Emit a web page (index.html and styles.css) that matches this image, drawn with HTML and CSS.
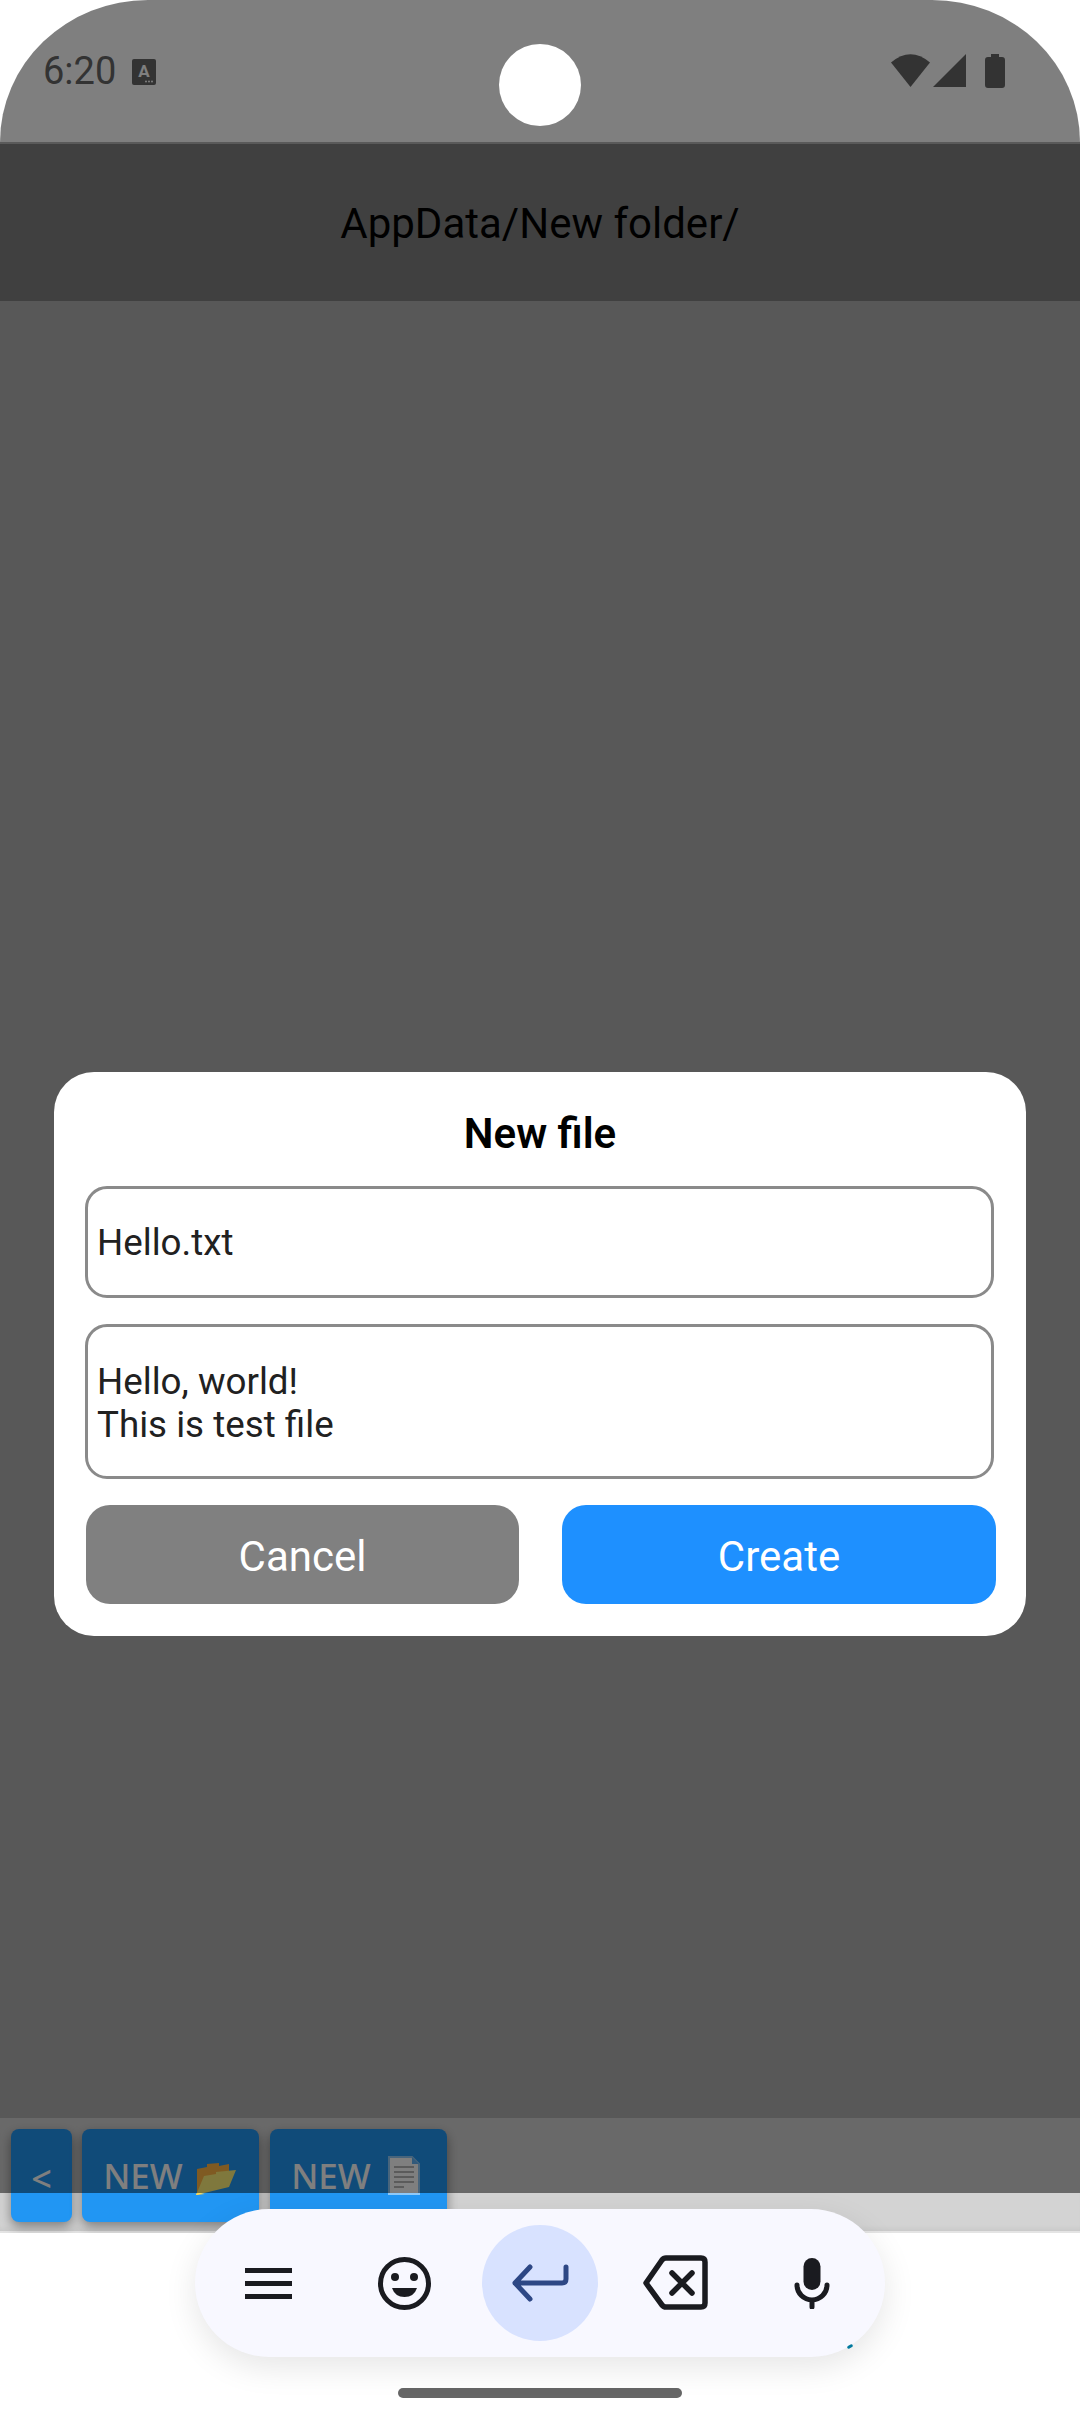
FILE: index.html
```html
<!DOCTYPE html>
<html lang="en">
  <head>
    <meta charset="UTF-8" />
    <meta name="viewport" content="width=device-width, initial-scale=1.0" />
    <title>New file</title>
    <link rel="stylesheet" href="styles.css">
  </head>
  <body>
    <div class="screen">
      <div class="status-bar">
        <div class="status-left">
          <span class="clock">6:20</span>
          <svg class="icon-ime" viewBox="0 0 24 26">
            <rect width="24" height="26" rx="2" fill="#666" />
            <text x="12" y="18" text-anchor="middle" class="ime-letter">A</text>
            <circle cx="14" cy="22.5" r="1" fill="#fff" />
            <circle cx="17" cy="22.5" r="1" fill="#fff" />
            <circle cx="20" cy="22.5" r="1" fill="#fff" />
          </svg>
        </div>
        <div class="camera"></div>
        <div class="status-right">
          <svg class="icon-wifi" viewBox="0 0 39 33">
            <path d="M0 8.500 Q19.500 -8 39 8.500 L19.500 33 Z" fill="#666" />
          </svg>
          <svg class="icon-signal" viewBox="0 0 33 33">
            <path d="M33 0 V33 H0 Z" fill="#666" />
          </svg>
          <svg class="icon-battery" viewBox="0 0 20 34">
            <path d="M6 0 H14 V3 H17 Q20 3 20 6 V31 Q20 34 17 34 H3 Q0 34 0 31 V6 Q0 3 3 3 H6 Z" fill="#666" />
          </svg>
        </div>
      </div>

      <header class="app-header">
        <h1>AppData/New folder/</h1>
      </header>

      <main class="file-list"></main>

      <nav class="toolbar">
        <button class="tool-btn tool-back">&lt;</button>
        <button class="tool-btn tool-new">
          NEW
          <svg class="icon-emoji" viewBox="0 0 40 32">
            <path d="M1 27 V6 L11 4 V1 L23 0 V3 L33 1 V10 L1 32 Z" fill="#ffb545" />
            <path d="M0 32 L8 13 L20 11 V9 L40 7 L33 24 Z" fill="#fff07a" />
            <path d="M0 32 L1 30 L9 31 Z" fill="#ffd54f" />
          </svg>
        </button>
        <button class="tool-btn tool-new">
          NEW
          <svg class="icon-emoji icon-doc" viewBox="0 0 32 39">
            <path d="M1 1 H24 L31 8 V38 H1 Z" fill="#fff" stroke="#90caf9" stroke-width="2" />
            <path d="M24 1 L31 8 H24 Z" fill="#64b5f6" />
            <path d="M6 11 H26 M6 16 H26 M6 21 H26 M6 26 H26 M6 31 H16" stroke="#9e9e9e" stroke-width="1.500" />
          </svg>
        </button>
      </nav>

      <div class="keyboard-area">
        <div class="home-handle"></div>
      </div>

      <div class="scrim">
        <form class="dialog">
          <h2 class="dialog-title">New file</h2>
          <input class="field field-name" type="text" value="Hello.txt" />
          <textarea class="field field-body">Hello, world!
This is test file</textarea>
          <div class="dialog-actions">
            <button type="button" class="dialog-btn btn-cancel">Cancel</button>
            <button type="button" class="dialog-btn btn-create">Create</button>
          </div>
        </form>
      </div>

      <div class="kb-pill">
        <div class="kb-key">
          <svg class="key-menu" viewBox="0 0 47 31">
            <path d="M0 0 H47 V5 H0 Z M0 13 H47 V18 H0 Z M0 26 H47 V31 H0 Z" fill="#1a1b20" />
          </svg>
        </div>
        <div class="kb-key">
          <svg class="key-emoji" viewBox="0 0 53 53">
            <circle cx="26.500" cy="26.500" r="24" fill="none" stroke="#1a1b20" stroke-width="5" />
            <circle cx="17" cy="20" r="4" fill="#1a1b20" />
            <circle cx="36" cy="20" r="4" fill="#1a1b20" />
            <path d="M14 31 H39 Q36 40 26.500 40 Q17 40 14 31 Z" fill="#1a1b20" />
          </svg>
        </div>
        <div class="kb-key kb-enter">
          <svg class="key-enter" viewBox="0 0 58 38">
            <path d="M55 3 V15 Q55 19 51 19 H4 M19 3 L4 19 L19 35" fill="none" stroke="#2d4785" stroke-width="5" stroke-linecap="round" stroke-linejoin="round" />
          </svg>
        </div>
        <div class="kb-key">
          <svg class="key-back" viewBox="0 0 70 58">
            <path d="M5 29 L21 6 Q22.500 4 25 4 H60 Q64 4 64 8 V49 Q64 53 60 53 H25 Q22.500 53 21 51 Z" fill="none" stroke="#1a1b20" stroke-width="5.500" stroke-linejoin="round" />
            <path d="M31 19 L51 39 M51 19 L31 39" fill="none" stroke="#1a1b20" stroke-width="5.500" stroke-linecap="round" />
          </svg>
        </div>
        <div class="kb-key">
          <svg class="key-mic" viewBox="0 0 38 52">
            <rect x="10.500" y="1" width="17" height="32" rx="8.500" fill="#1a1b20" />
            <path d="M4 28 A15 15 0 0 0 34 28 M19 43 V50" fill="none" stroke="#1a1b20" stroke-width="5" stroke-linecap="round" />
          </svg>
        </div>
        <span class="kb-speck"></span>
      </div>
    </div>
  </body>
</html>
```

FILE: styles.css
```css
* {
  box-sizing: border-box;
}

html,
body {
  margin: 0;
  background-color: #fff;
}

body {
  font-family: Roboto, "Noto Sans", sans-serif;
}

.screen {
  position: relative;
  display: flex;
  flex-direction: column;
  width: 1080px;
  height: 2424px;
  overflow: hidden;
  border-radius: 148px 148px 0 0 / 142px 142px 0 0;
  background-color: #fff;
}

/* status bar */
.status-bar {
  flex: none;
  display: flex;
  align-items: flex-start;
  justify-content: space-between;
  height: 142px;
  padding: 54px 75px 0 43px;
  background-color: #fff;
}

.status-left {
  display: flex;
  align-items: center;
  gap: 16px;
  height: 33px;
}

.clock {
  margin-top: 2px;
  font-size: 38px;
  line-height: 33px;
  color: #666;
}

.icon-ime {
  width: 24px;
  height: 26px;
  margin-top: 3px;
}

.ime-letter {
  font-family: Roboto, sans-serif;
  font-size: 17px;
  font-weight: 700;
  fill: #fff;
}

.camera {
  position: absolute;
  top: 44px;
  left: 499px;
  z-index: 3;
  width: 82px;
  height: 82px;
  border-radius: 50%;
  background-color: #fff;
}

.status-right {
  display: flex;
  align-items: flex-start;
}

.status-right svg {
  display: block;
}

.icon-wifi {
  width: 39px;
  height: 33px;
  margin-right: 3px;
}

.icon-signal {
  width: 33px;
  height: 33px;
  margin-right: 19px;
}

.icon-battery {
  width: 20px;
  height: 34px;
}

/* app */
.app-header {
  flex: none;
  display: flex;
  align-items: center;
  justify-content: center;
  height: 159px;
  padding-top: 2px;
  border-top: 2px solid #b4b4b4;
  background-color: #808080;
}

.app-header h1 {
  margin: 0;
  font-size: 42px;
  font-weight: 400;
  color: #000;
}

.file-list {
  flex: 1;
  background-color: #b0b0b0;
}

.toolbar {
  flex: none;
  display: flex;
  gap: 10px;
  height: 115px;
  padding: 11px 11px 0;
  background-color: #d3d3d3;
  border-bottom: 2px solid #e4e4e4;
  box-shadow: inset 0 -5px 5px -3px rgba(0, 0, 0, 0.06);
}

.tool-btn {
  display: flex;
  align-items: center;
  justify-content: center;
  gap: 13px;
  flex: none;
  height: 93px;
  padding: 0 2px 0 0;
  border: none;
  border-radius: 8px;
  background-color: #2196f3;
  color: #fff;
  font-family: "Noto Sans", sans-serif;
  font-size: 35px;
  font-weight: 500;
  box-shadow: 0 5px 12px rgba(0, 0, 0, 0.4);
}

.tool-back {
  width: 61px;
  padding: 5px 0 0;
  font-size: 36px;
}

.tool-new {
  width: 177px;
}

.tool-new + .tool-new {
  margin-left: 1px;
}

.icon-emoji {
  width: 40px;
  height: 32px;
  margin-top: 6px;
}

.icon-doc {
  width: 32px;
  height: 39px;
  margin: 0 4px;
}

.keyboard-area {
  flex: none;
  display: flex;
  align-items: flex-end;
  justify-content: center;
  height: 191px;
  padding-bottom: 26px;
  background-color: #fff;
}

.home-handle {
  width: 284px;
  height: 10px;
  border-radius: 5px;
  background-color: #666;
}

/* dialog */
.scrim {
  position: absolute;
  top: 0;
  left: 0;
  width: 100%;
  height: 2193px;
  padding: 1072px 54px 0;
  background-color: rgba(0, 0, 0, 0.5);
}

.dialog {
  display: flex;
  flex-direction: column;
  height: 564px;
  padding: 32px;
  border-radius: 40px;
  background-color: #fff;
}

.dialog-title {
  height: 56px;
  margin: 0 0 26px;
  padding-top: 2px;
  font-size: 42px;
  font-weight: 600;
  line-height: 56px;
  text-align: center;
  color: #000;
}

.field {
  display: block;
  width: 909px;
  margin-left: -1px;
  padding: 0 9px;
  border: 3px solid #8a8a8a;
  border-radius: 22px;
  background-color: #fff;
  font-family: Roboto, sans-serif;
  font-size: 36.75px;
  color: #212121;
  outline: none;
  resize: none;
  overflow: hidden;
}

.field-name {
  height: 112px;
  margin-bottom: 26px;
}

.field-body {
  height: 155px;
  margin-bottom: 26px;
  padding-top: 33px;
  line-height: 43px;
}

.dialog-actions {
  display: flex;
  justify-content: space-between;
  width: 910px;
}

.dialog-btn {
  width: 433px;
  height: 99px;
  padding: 3px 0 0;
  border: none;
  border-radius: 24px;
  font-family: Roboto, sans-serif;
  font-size: 42px;
  color: #fff;
}

.btn-cancel {
  background-color: #808080;
}

.btn-create {
  width: 434px;
  background-color: #1e90ff;
}

/* keyboard toolbar */
.kb-pill {
  position: absolute;
  top: 2209px;
  left: 195px;
  z-index: 2;
  display: flex;
  align-items: center;
  width: 690px;
  height: 148px;
  padding: 0 5px;
  border-radius: 74px;
  background-color: #f8f8ff;
  box-shadow: 0 10px 32px rgba(0, 0, 0, 0.1);
}

.kb-key {
  display: flex;
  align-items: center;
  justify-content: center;
  width: 136px;
  height: 116px;
}

.kb-enter {
  width: 116px;
  margin: 0 10px;
  border-radius: 50%;
  background-color: #d8e2ff;
}

.kb-key svg {
  display: block;
}

.key-menu {
  width: 47px;
  height: 31px;
}

.key-emoji {
  width: 53px;
  height: 53px;
}

.key-enter {
  width: 58px;
  height: 38px;
}

.key-back {
  width: 70px;
  height: 58px;
}

.key-mic {
  width: 38px;
  height: 52px;
}

.kb-speck {
  position: absolute;
  top: 136px;
  left: 652px;
  width: 6px;
  height: 3px;
  border-radius: 2px;
  background-color: #00799e;
  transform: rotate(-30deg);
}
```
